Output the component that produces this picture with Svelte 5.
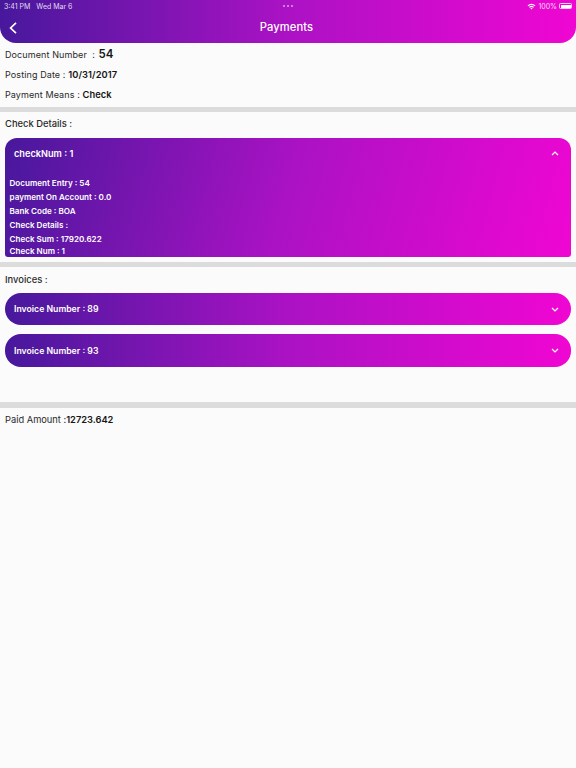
<script>
  const details = [
    'Document Entry : 54',
    'payment On Account : 0.0',
    'Bank Code : BOA',
    'Check Details :',
    'Check Sum : 17920.622',
  ];
  const invoices = ['89', '93'];
</script>

<div class="page">
  <header class="nav">
    <div class="status">
      <span class="status-left"><span>3:41 PM</span><span>Wed Mar 6</span></span>
      <span class="dots"><i></i><i></i><i></i></span>
      <span class="status-right">
        <svg width="9" height="7" viewBox="0 0 10 8">
          <path d="M0.5 2.8a6.4 6.4 0 0 1 9 0L8.6 3.7a5.1 5.1 0 0 0-7.2 0z" fill="#fff" />
          <path d="M2.2 4.5a4 4 0 0 1 5.6 0L6.9 5.4a2.7 2.7 0 0 0-3.8 0z" fill="#fff" />
          <path d="M3.8 6.1a1.7 1.7 0 0 1 2.4 0L5 7.4z" fill="#fff" />
        </svg>
        <span>100%</span>
        <span class="battery"><span class="fill"></span></span>
      </span>
    </div>
    <div class="titlebar">
      <svg class="back" width="8" height="12" viewBox="0 0 8 12">
        <path d="M7 0.8 L1.6 6 L7 11.2" fill="none" stroke="#fff" stroke-width="1.7" />
      </svg>
      <span class="title">Payments</span>
    </div>
  </header>

  <section class="summary">
    <p class="doc">Document Number &nbsp;: <b>54</b></p>
    <p>Posting Date : <b>10/31/2017</b></p>
    <p>Payment Means : <b>Check</b></p>
  </section>

  <div class="divider"></div>

  <p class="label check-label">Check Details :</p>
  <div class="card">
    <div class="card-head">
      <span>checkNum : 1</span>
      <svg width="8" height="5" viewBox="0 0 8 5">
        <path d="M1 4 L4 1 L7 4" fill="none" stroke="#fff" stroke-width="1.2" />
      </svg>
    </div>
    <div class="card-body">
      {#each details as line}
        <div class="line">{line}</div>
      {/each}
      <div class="line last">Check Num : 1</div>
    </div>
  </div>

  <div class="divider second"></div>

  <p class="label invoices-label">Invoices :</p>
  <div class="invoices">
    {#each invoices as num}
      <div class="invoice">
        <span>Invoice Number : {num}</span>
        <svg width="8" height="5" viewBox="0 0 8 5">
          <path d="M1 1 L4 4 L7 1" fill="none" stroke="#fff" stroke-width="1.2" />
        </svg>
      </div>
    {/each}
  </div>

  <div class="divider third"></div>

  <p class="paid">Paid Amount :<b>12723.642</b></p>
</div>

<style>
  :global(body) {
    margin: 0;
    background: #fbfbfb;
  }

  .page {
    --brand: #47189c, #ab12c4 50%, #f006d2;
    width: 576px;
    height: 768px;
    overflow: hidden;
    background: #fbfbfb;
    color: #2a2a2a;
    font-family: Inter, "Liberation Sans", sans-serif;
    font-size: 10px;
  }

  p {
    margin: 0;
  }

  b {
    font-weight: 600;
    color: #161616;
  }

  .nav {
    height: 43px;
    background: linear-gradient(90deg, var(--brand));
    border-radius: 0 0 16px 16px;
    color: #fff;
  }

  .status {
    height: 12px;
    padding: 0 4px;
    display: grid;
    grid-template-columns: 1fr auto 1fr;
    align-items: center;
    font-size: 7px;
    color: rgba(255, 255, 255, 0.85);
  }

  .status-left {
    display: flex;
    gap: 6px;
  }

  .dots {
    display: flex;
    gap: 1.5px;
  }
  .dots i {
    width: 2.5px;
    height: 2.5px;
    border-radius: 50%;
    background: rgba(255, 255, 255, 0.6);
  }

  .status-right {
    display: flex;
    justify-content: flex-end;
    align-items: center;
    gap: 2px;
  }

  .battery {
    width: 13px;
    height: 6px;
    border: 0.5px solid rgba(255, 255, 255, 0.8);
    border-radius: 1.5px;
    display: flex;
    padding: 0.5px;
    box-sizing: border-box;
  }
  .battery .fill {
    flex: 1;
    background: #fff;
  }

  .titlebar {
    height: 30px;
    position: relative;
    display: flex;
    align-items: center;
    justify-content: center;
  }
  .back {
    position: absolute;
    left: 9px;
    top: 10px;
  }
  .title {
    font-size: 11.2px;
    font-weight: 500;
    letter-spacing: 0.1px;
    margin-left: -3px;
  }

  .summary {
    height: 62.7px;
    padding-top: 1px;
  }
  .summary p {
    font-size: 9px;
    letter-spacing: 0.1px;
    padding-left: 5px;
    line-height: 20.2px;
    white-space: pre-wrap;
  }
  .summary b {
    font-size: 9.3px;
  }
  .summary .doc b {
    font-size: 11.5px;
    margin-left: 1px;
  }

  .divider {
    height: 5.3px;
    background: #dcdcdc;
  }

  .label {
    padding-left: 5px;
    font-size: 9.4px;
    font-weight: 500;
    line-height: 12px;
  }
  .check-label {
    margin-top: 6.5px;
  }

  .card {
    margin: 7.5px 5px 0;
    height: 119px;
    box-sizing: border-box;
    overflow: hidden;
    border-radius: 12px 12px 3px 3px;
    background: linear-gradient(105deg, var(--brand));
    color: #fff;
    font-weight: 600;
  }

  .card-head {
    height: 32px;
    padding: 0 12px 0 9px;
    display: flex;
    align-items: center;
    justify-content: space-between;
    font-size: 9.2px;
  }

  .card-body {
    padding: 6px 0 0 4.5px;
    font-size: 8.1px;
  }
  .line {
    height: 14px;
    line-height: 14px;
  }
  .line.last {
    margin-top: -2px;
  }

  .divider.second {
    margin-top: 4.7px;
  }

  .invoices-label {
    margin-top: 7px;
  }

  .invoices {
    margin: 7px 5px 0;
    display: flex;
    flex-direction: column;
    gap: 9px;
  }

  .invoice {
    height: 32.5px;
    padding: 0 12px 0 9px;
    border-radius: 16px;
    background: linear-gradient(90deg, var(--brand));
    color: #fff;
    font-size: 8.7px;
    font-weight: 600;
    display: flex;
    align-items: center;
    justify-content: space-between;
  }

  .divider.third {
    margin-top: 35.3px;
    height: 5.7px;
  }

  .paid {
    padding-left: 5px;
    margin-top: 6px;
    font-size: 9.3px;
    line-height: 12px;
  }
</style>
